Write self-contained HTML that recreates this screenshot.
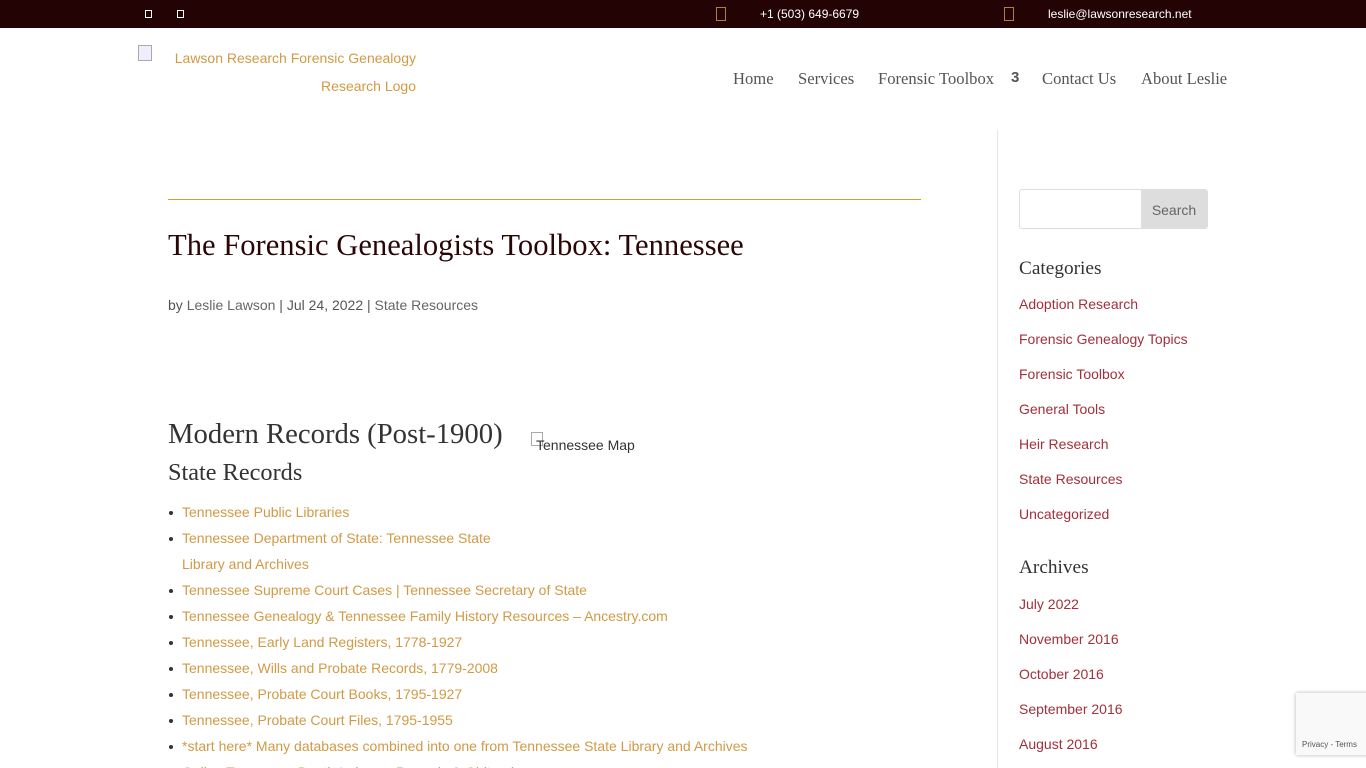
<!DOCTYPE html>
<html style="overflow:hidden;height:768px"><head><meta charset="utf-8"><style>
*{margin:0;padding:0;box-sizing:border-box}
body{width:1366px;height:768px;overflow:hidden;background:#fff;font-family:"Liberation Sans",Arial,sans-serif;position:relative;color:#666}
.top{position:absolute;left:0;top:0;width:1366px;height:28px;background:#230304;color:#fff;font-size:12px}
.top span{position:absolute;top:7px}
.sq{position:absolute;width:7px;height:8px;border:1.5px solid #fff;top:10px}
.ic{position:absolute;width:10px;height:14px;border:1px solid #b07a4a;top:7px}
.logo{position:absolute;left:137px;top:44px;font-size:14px;color:#d19a45;line-height:28px;text-align:right;width:279px}
.nav{position:absolute;top:69px;font-family:"Liberation Serif",Georgia,serif;font-size:16.6px;color:#555}
.nav span{position:absolute;white-space:nowrap}
.vline{position:absolute;left:997px;top:130px;width:1px;height:638px;background:#e6e6e6}
.rule{position:absolute;left:168px;top:199px;width:753px;height:1px;background:#c9a227;border-top:1px solid #c9a227;height:0}
h1{position:absolute;left:168px;top:228px;font-family:"Liberation Serif",Georgia,serif;font-weight:normal;font-size:30.6px;color:#2a0505;white-space:nowrap}
.meta{position:absolute;left:168px;top:297px;font-size:14px;color:#555}
.meta a{color:#666}
h2{position:absolute;font-family:"Liberation Serif",Georgia,serif;font-weight:normal;color:#333;white-space:nowrap}
ul{position:absolute;left:168px;top:499px;list-style:none;font-size:14px;line-height:26px;color:#d19a45}
ul li{padding-left:14px;position:relative;white-space:nowrap}
ul li:before{content:"";position:absolute;left:1px;top:12px;width:4px;height:4px;border-radius:2px;background:#333}
ul li.c:before{display:none}
.side{position:absolute;left:1019px;font-size:14px;color:#a3303a}
.side div{position:absolute;white-space:nowrap}
.sh{font-family:"Liberation Serif",Georgia,serif;font-size:19.3px;color:#333}
</style></head><body>
<div class="top">
<div class="sq" style="left:145px"></div><div class="sq" style="left:177px"></div>
<div class="ic" style="left:716px"></div><span style="left:760px">+1 (503) 649-6679</span>
<div class="ic" style="left:1004px"></div><span style="left:1048px">leslie@lawsonresearch.net</span>
</div>
<div style="position:absolute;left:138px;top:45px;width:14px;height:16px;border:1px solid #aaa;background:#eef"></div>
<div class="logo">Lawson Research Forensic Genealogy<br>Research Logo</div>
<div class="nav">
<span style="left:733px">Home</span><span style="left:798px">Services</span><span style="left:878px">Forensic Toolbox</span><span style="left:1011px;font-family:'Liberation Sans',sans-serif;font-weight:bold;font-size:15px">3</span><span style="left:1042px">Contact Us</span><span style="left:1141px">About Leslie</span>
</div>
<div class="vline"></div>
<div class="rule"></div>
<h1>The Forensic Genealogists Toolbox: Tennessee</h1>
<div class="meta">by <a>Leslie Lawson</a> | Jul 24, 2022 | <a>State Resources</a></div>
<h2 style="left:168px;top:418px;font-size:28.7px">Modern Records (Post-1900)</h2>
<div style="position:absolute;left:531px;top:432px;width:12px;height:14px;border:1px solid #aaa"></div>
<div style="position:absolute;left:536px;top:437px;font-size:14px;color:#333">Tennessee Map</div>
<h2 style="left:168px;top:459px;font-size:24.3px">State Records</h2>
<ul>
<li>Tennessee Public Libraries</li>
<li>Tennessee Department of State: Tennessee State</li>
<li class="c">Library and Archives</li>
<li>Tennessee Supreme Court Cases | Tennessee Secretary of State</li>
<li>Tennessee Genealogy &amp; Tennessee Family History Resources – Ancestry.com</li>
<li>Tennessee, Early Land Registers, 1778-1927</li>
<li>Tennessee, Wills and Probate Records, 1779-2008</li>
<li>Tennessee, Probate Court Books, 1795-1927</li>
<li>Tennessee, Probate Court Files, 1795-1955</li>
<li>*start here* Many databases combined into one from Tennessee State Library and Archives</li>
<li>Online Tennessee Death Indexes, Records &amp; Obituaries</li>
</ul>
<div style="position:absolute;left:1019px;top:189px;width:189px;height:40px;border:1px solid #ddd;border-radius:3px;overflow:hidden">
<div style="position:absolute;right:0;top:0;width:66px;height:40px;background:#ddd;color:#666;font-size:14px;text-align:center;line-height:40px">Search</div></div>
<div class="side" style="top:0">
<div class="sh" style="top:258px">Categories</div>
<div style="top:296px">Adoption Research</div>
<div style="top:331px">Forensic Genealogy Topics</div>
<div style="top:366px">Forensic Toolbox</div>
<div style="top:401px">General Tools</div>
<div style="top:436px">Heir Research</div>
<div style="top:471px">State Resources</div>
<div style="top:506px">Uncategorized</div>
<div class="sh" style="top:557px">Archives</div>
<div style="top:596px">July 2022</div>
<div style="top:631px">November 2016</div>
<div style="top:666px">October 2016</div>
<div style="top:701px">September 2016</div>
<div style="top:736px">August 2016</div>
</div>
<div style="position:absolute;left:1296px;top:693px;width:80px;height:62px;background:#f9f9f9;box-shadow:0 0 4px rgba(0,0,0,.3);font-size:8px;color:#555;padding:47px 0 0 6px">Privacy - Terms</div>
</body></html>
